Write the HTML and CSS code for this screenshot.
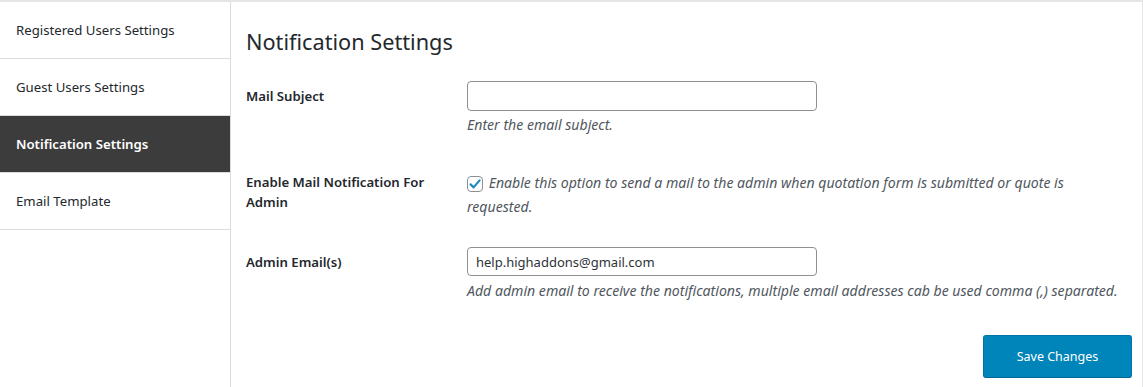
FILE: index.html
```html
<!DOCTYPE html>
<html lang="en">
<head>
  <meta charset="UTF-8">
  <meta name="viewport" content="width=device-width, initial-scale=1.0">
  <title>Notification Settings</title>
  <link rel="stylesheet" href="styles.css">
</head>
<body>
  <div class="page">
    <ul class="sidebar">
      <li class="nav-item">Registered Users Settings</li>
      <li class="nav-item">Guest Users Settings</li>
      <li class="nav-item active">Notification Settings</li>
      <li class="nav-item">Email Template</li>
    </ul>
    <div class="main">
      <h2>Notification Settings</h2>
      <form class="settings-form">
        <div class="row row-subject">
          <label class="row-label" for="mail-subject">Mail Subject</label>
          <div class="row-field">
            <input type="text" id="mail-subject" class="text-input">
            <p class="description">Enter the email subject.</p>
          </div>
        </div>
        <div class="row row-enable">
          <div class="row-label">Enable Mail Notification For Admin</div>
          <div class="row-field">
            <p class="check-line">
              <span class="checkbox">
                <svg width="14" height="14" viewBox="0 0 14 14"><path d="M2.6 7.4 L5.6 10.4 L11.6 3.4" fill="none" stroke="#1e8cbe" stroke-width="2.2" stroke-linecap="round" stroke-linejoin="round"/></svg>
              </span>
              <span class="description">Enable this option to send a mail to the admin when quotation form is submitted or quote is requested.</span>
            </p>
          </div>
        </div>
        <div class="row row-email">
          <label class="row-label" for="admin-email">Admin Email(s)</label>
          <div class="row-field">
            <input type="text" id="admin-email" class="text-input" value="help.highaddons@gmail.com">
            <p class="description">Add admin email to receive the notifications, multiple email addresses cab be used comma (,) separated.</p>
          </div>
        </div>
        <div class="actions">
          <button type="button" class="save-button">Save Changes</button>
        </div>
      </form>
    </div>
  </div>
</body>
</html>
```

FILE: styles.css
```css
html, body {
  margin: 0;
  padding: 0;
  height: 100%;
}
body {
  font-family: 'Noto Sans', 'Open Sans', sans-serif;
  font-size: 14px;
  color: #23282d;
  background-color: #fff;
}
.page {
  display: flex;
  min-height: 100%;
  box-sizing: border-box;
  border-top: 2px solid #e5e5e5;
  border-right: 1px solid #e5e5e5;
}
.sidebar {
  list-style: none;
  margin: 0;
  padding: 0;
  width: 230px;
  flex-shrink: 0;
  border-right: 1px solid #dcdcdc;
}
.nav-item {
  height: 56px;
  display: flex;
  align-items: center;
  padding-left: 16px;
  border-bottom: 1px solid #dcdcdc;
  font-size: 13.2px;
  color: #23282d;
}
.nav-item.active {
  background-color: #3c3c3c;
  color: #fff;
  font-weight: 600;
}
.main {
  flex: 1;
  padding: 0 10px 0 15px;
}
h2 {
  margin: 25px 0 0;
  font-size: 21.7px;
  font-weight: 400;
  line-height: 29px;
  color: #23282d;
}
.row {
  display: grid;
  grid-template-columns: 221px 1fr;
}
.row-label {
  font-weight: 600;
  font-size: 13.2px;
  line-height: 20px;
}
.row-subject {
  margin-top: 25px;
}
.row-subject .row-label,
.row-email .row-label {
  padding-top: 5px;
}
.row-enable {
  margin-top: 36px;
}
.row-enable .row-label {
  padding-top: 1px;
  padding-right: 20px;
}
.row-email {
  margin-top: 28px;
}
.text-input {
  display: block;
  box-sizing: border-box;
  width: 350px;
  height: 30px;
  margin: 0;
  padding: 0 8px;
  border: 1px solid #8c8f94;
  border-radius: 4px;
  font-family: inherit;
  font-size: 13px;
  color: #2c3338;
  background-color: #fff;
}
.row-email .text-input {
  height: 29px;
}
.description {
  margin: 4px 0 0;
  font-style: italic;
  font-size: 14.1px;
  line-height: 20px;
  color: #50575e;
}
.row-email .description {
  margin-top: 5px;
}
.check-line {
  margin: 0;
  max-width: 640px;
  line-height: 24px;
}
.check-line .description {
  margin: 0;
  line-height: 24px;
}
.checkbox {
  display: inline-flex;
  align-items: center;
  justify-content: center;
  box-sizing: border-box;
  width: 16px;
  height: 16px;
  margin-right: 2px;
  vertical-align: -3px;
  border: 1px solid #8c8f94;
  border-radius: 4px;
  background-color: #fff;
}
.actions {
  display: flex;
  justify-content: flex-end;
  margin-top: 34px;
}
.save-button {
  width: 149px;
  height: 43px;
  background-color: #0085ba;
  color: #fff;
  border: 1px solid #0073aa;
  border-bottom-color: #006799;
  border-radius: 3px;
  font-family: inherit;
  font-size: 12.5px;
  cursor: pointer;
}
.save-button:hover {
  background-color: #008ec2;
}
```
